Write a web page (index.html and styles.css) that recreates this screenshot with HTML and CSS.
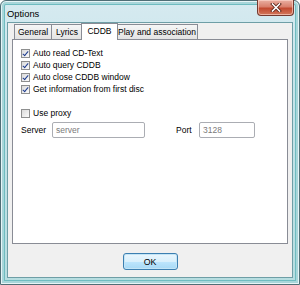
FILE: index.html
```html
<!DOCTYPE html>
<html>
<head>
<meta charset="utf-8">
<link rel="stylesheet" href="styles.css">
</head>
<body>
<div class="window">
  <div class="titlebar">
    <span class="title">Options</span>
    <div class="close">
      <svg width="12" height="9" viewBox="0 0 12 9">
        <path d="M2.5 1 L9.5 8 M9.5 1 L2.5 8" stroke="#5a2418" stroke-width="3.2" stroke-linecap="square"/>
        <path d="M2.5 1 L9.5 8 M9.5 1 L2.5 8" stroke="#ffffff" stroke-width="1.6" stroke-linecap="square"/>
      </svg>
    </div>
  </div>
  <div class="client">
    <div class="tabs">
      <div class="tab t-general">General</div>
      <div class="tab t-lyrics">Lyrics</div>
      <div class="tab active t-cddb">CDDB</div>
      <div class="tab t-play">Play and association</div>
    </div>
    <div class="panel">
      <label class="check"><span class="box on"></span>Auto read CD-Text</label>
      <label class="check"><span class="box on"></span>Auto query CDDB</label>
      <label class="check"><span class="box on"></span>Auto close CDDB window</label>
      <label class="check"><span class="box on"></span>Get information from first disc</label>
      <label class="check proxy"><span class="box"></span>Use proxy</label>
      <div class="fields">
        <span class="lbl">Server</span>
        <span class="input server">server</span>
        <span class="lbl port">Port</span>
        <span class="input portin">3128</span>
      </div>
    </div>
    <div class="footer">
      <div class="btn">OK</div>
    </div>
  </div>
</div>
</body>
</html>
```
FILE: styles.css
```css
* { box-sizing: border-box; }
html, body { margin: 0; padding: 0; }
body {
  font-family: "Liberation Sans", Arial, sans-serif;
  font-size: 8.5px;
  color: #000;
  background: #fff;
}
.window {
  width: 300px;
  height: 285px;
  background: linear-gradient(#d6eaf0, #c6e4ea 30%, #bde0e4 70%, #b6dde0);
  border: 1px solid #4f6e76;
  border-radius: 6px 6px 0 0;
  box-shadow: inset 0 0 0 1px #e6f4f6, inset 0 0 0 3px #a8d6da, inset 0 0 0 4px #6fbcc0;
  display: flex;
  flex-direction: column;
  padding: 0 6px 6px 6px;
}
.titlebar {
  height: 21px;
  display: flex;
  justify-content: space-between;
  align-items: flex-start;
}
.title {
  font-size: 9.4px;
  padding-top: 7px;
  color: #000;
}
.close {
  width: 37px;
  height: 16px;
  margin-right: -1px;
  margin-top: -1px;
  background: linear-gradient(#eab0a2, #d9806c 45%, #c24a30 55%, #d2785c);
  border: 1px solid #743a30;
  border-top: none;
  border-radius: 0 0 4px 4px;
  box-shadow: inset 0 0 0 1px rgba(255,220,210,0.6);
  display: flex;
  align-items: center;
  justify-content: center;
}
.client {
  flex: 1;
  background: #f0f0f0;
  border: 1px solid #6e9ea6;
  display: flex;
  flex-direction: column;
  padding: 0 4px;
}
.tabs {
  display: flex;
  padding-left: 2px;
  height: 17px;
  align-items: flex-end;
  position: relative;
  z-index: 1;
  margin-bottom: -1px;
}
.tab {
  height: 15px;
  margin-bottom: 1px;
  border: 1px solid #898c95;
  border-bottom: none;
  margin-right: -1px;
  background: linear-gradient(#f6f6f6, #e3e3e3);
  display: flex;
  align-items: center;
  justify-content: center;
  padding-bottom: 1px;
}
.t-general { width: 38px; }
.t-lyrics { width: 32px; }
.t-cddb { width: 37px; }
.t-play { width: 82px; }
.tab.active {
  height: 17px;
  margin-bottom: 0;
  background: #fff;
  margin-left: -1px;
  margin-right: -2px;
  padding-bottom: 2px;
  z-index: 2;
  position: relative;
}
.panel {
  height: 205px;
  background: #fff;
  border: 1px solid #898c95;
  padding: 7px 8px 0 8px;
  display: flex;
  flex-direction: column;
}
.check {
  display: flex;
  align-items: center;
  height: 12px;
}
.box {
  width: 9px;
  height: 9px;
  border: 1px solid #8e8f8f;
  background: linear-gradient(135deg, #dadada, #fbfbfb);
  position: relative;
  margin-right: 3px;
  flex: none;
}
.box.on::after {
  content: "";
  position: absolute;
  left: 2px;
  top: 0px;
  width: 2px;
  height: 5px;
  border: solid #1d3c8f;
  border-width: 0 1.6px 1.6px 0;
  transform: rotate(40deg);
}
.proxy { margin-top: 12px; }
.fields {
  display: flex;
  align-items: center;
  margin-top: 2px;
  height: 18px;
}
.lbl { width: 31px; }
.input {
  height: 16px;
  border: 1px solid #abadb3;
  border-radius: 2px;
  background: #fff;
  color: #7a7a7a;
  padding: 0 3px;
  display: flex;
  align-items: center;
}
.server { width: 93px; }
.lbl.port { margin-left: 31px; width: 23px; }
.portin { width: 56px; }
.footer {
  flex: 1;
  display: flex;
  justify-content: center;
  align-items: flex-start;
  padding-top: 9px;
}
.btn {
  width: 55px;
  height: 17px;
  border: 1px solid #3c7fb1;
  border-radius: 3px;
  background: linear-gradient(#eaf6fd 0%, #d9f0fc 50%, #bee6fd 50%, #a7d9f5 100%);
  box-shadow: inset 0 0 0 1px #c4e5f6;
  display: flex;
  align-items: center;
  justify-content: center;
  font-size: 8.8px;
}
```
